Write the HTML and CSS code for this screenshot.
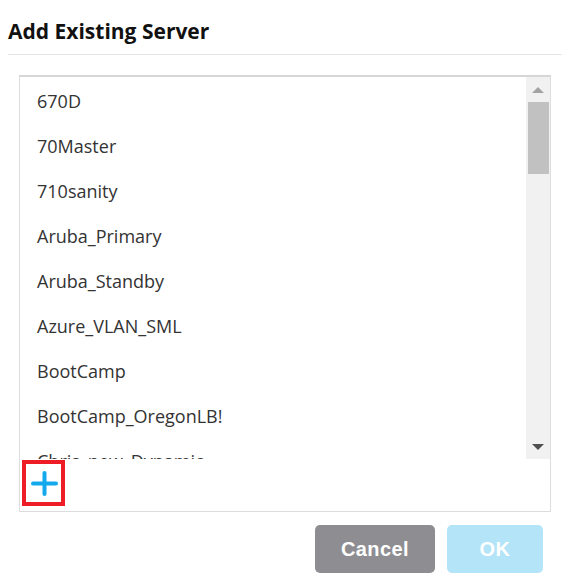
FILE: index.html
```html
<!DOCTYPE html>
<html lang="en">
<head>
<meta charset="utf-8">
<title>Add Existing Server</title>
<link rel="stylesheet" href="styles.css">
</head>
<body>
<div class="dialog">
  <h1 class="title">Add Existing Server</h1>
  <div class="body">
    <div class="listbox">
      <div class="list-row">
        <ul class="list">
          <li>670D</li>
          <li>70Master</li>
          <li>710sanity</li>
          <li>Aruba_Primary</li>
          <li>Aruba_Standby</li>
          <li>Azure_VLAN_SML</li>
          <li>BootCamp</li>
          <li>BootCamp_OregonLB!</li>
          <li>Chris_new_Dynamic</li>
        </ul>
        <div class="scrollbar">
          <div class="arrow arrow-up"></div>
          <div class="track"><div class="thumb"></div></div>
          <div class="arrow arrow-down"></div>
        </div>
      </div>
      <div class="add-row">
        <button class="add-btn" type="button" aria-label="Add">
          <svg width="27" height="25" viewBox="0 0 27 25"><path d="M2 12.5H25M13.5 2V23" stroke="#14a9ec" stroke-width="4" stroke-linecap="round" fill="none"/></svg>
        </button>
      </div>
    </div>
    <div class="actions">
      <button class="btn btn-cancel" type="button">Cancel</button>
      <button class="btn btn-ok" type="button">OK</button>
    </div>
  </div>
</div>
</body>
</html>
```
FILE: styles.css
```css
* { box-sizing: border-box; }
html, body { margin: 0; padding: 0; background: #fff; }
body { font-family: "Open Sans", "Liberation Sans", sans-serif; color: #333; }

.dialog { width: 562px; height: 583px; padding: 0 0 0 8px; }

.title {
  margin: 0;
  padding: 19px 0 11px 0;
  font-size: 21px;
  font-weight: 700;
  line-height: 24px;
  color: #111;
  border-bottom: 1px solid #e5e5e5;
}

.body { padding: 20px 11px 0 11px; }

.listbox {
  border: 1px solid #dddddd;
  border-top: 2px solid #d6d6d6;
  height: 437px;
  display: flex;
  flex-direction: column;
}

.list-row { display: flex; height: 382px; }

.list {
  flex: 1;
  list-style: none;
  margin: 0;
  padding: 0 0 0 17px;
  overflow: hidden;
}
.list li {
  height: 45px;
  line-height: 45px;
  font-size: 18px;
  color: #333;
  padding-top: 2px;
  white-space: nowrap;
}

.scrollbar {
  width: 24px;
  background: #f1f1f1;
  display: flex;
  flex-direction: column;
  align-items: stretch;
}
.arrow { height: 25px; display: flex; align-items: center; justify-content: center; }
.arrow-up::before {
  content: "";
  border-left: 6px solid transparent;
  border-right: 6px solid transparent;
  border-bottom: 6px solid #a3a3a3;
}
.arrow-down::before {
  content: "";
  border-left: 6px solid transparent;
  border-right: 6px solid transparent;
  border-top: 6px solid #505050;
}
.track { flex: 1; padding: 0 1px 0 2px; }
.thumb { height: 72px; background: #c1c1c1; }

.add-row { flex: 1; padding: 1px 0 0 2px; }
.add-btn {
  width: 43px;
  height: 46px;
  border: 4px solid #ee1c25;
  background: #fff;
  padding: 0;
  margin: 0;
  display: flex;
  align-items: center;
  justify-content: center;
}
.add-btn svg { display: block; margin-left: 1px; }

.actions {
  display: flex;
  justify-content: flex-end;
  gap: 12px;
  padding: 13px 8px 0 0;
}
.btn {
  height: 48px;
  border: none;
  border-radius: 5px;
  color: #fff;
  font-family: "Liberation Sans", Arial, sans-serif;
  font-weight: 700;
  font-size: 20px;
  letter-spacing: 0.4px;
  padding: 0;
}
.btn-cancel { width: 120px; background: #8e8e92; }
.btn-ok { width: 96px; background: #b3e4f8; }
```
